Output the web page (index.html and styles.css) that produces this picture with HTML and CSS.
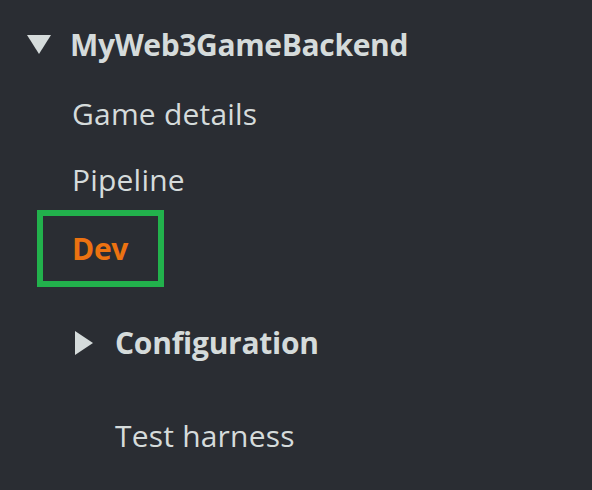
FILE: index.html
```html
<!DOCTYPE html>
<html>
<head>
<meta charset="utf-8">
<link rel="stylesheet" href="styles.css">
</head>
<body>
<nav class="tree">
  <div class="head">
    <svg class="caret-down" width="24" height="19" viewBox="0 0 24 19"><polygon points="0,0 24,0 12,19" fill="#d5dbdb"/></svg>
    <span class="title">MyWeb3GameBackend</span>
  </div>
  <ul class="items">
    <li class="item item-game">Game details</li>
    <li class="item item-pipe">Pipeline</li>
    <li class="item item-dev"><span class="dev-box">Dev</span></li>
    <li class="item item-config">
      <svg class="caret-right" width="18" height="24" viewBox="0 0 18 24"><polygon points="0,0 18,12 0,24" fill="#d5dbdb"/></svg>
      <span class="config">Configuration</span>
    </li>
    <li class="item item-test">Test harness</li>
  </ul>
</nav>
</body>
</html>
```

FILE: styles.css
```css
html, body {
  margin: 0;
  padding: 0;
  background: #2a2d33;
  height: 100%;
}
body {
  font-family: "Open Sans", "Noto Sans", sans-serif;
  font-size: 30px;
  line-height: 40px;
  color: #d5dbdb;
  overflow: hidden;
  letter-spacing: 0.2px;
}
.tree {
  padding-left: 27px;
  padding-top: 25px;
}
.head {
  display: flex;
  align-items: center;
  height: 40px;
}
.caret-down {
  margin-right: 19px;
  margin-top: -1px;
}
.title {
  font-weight: 700;
  letter-spacing: -0.35px;
}
.items {
  list-style: none;
  margin: 0;
  padding: 0 0 0 10px;
}
.item {
  height: 40px;
  padding-left: 35px;
}
.item-game { margin-top: 29px; }
.item-pipe { margin-top: 26px; }
.item-dev {
  margin-top: 10px;
  height: auto;
  padding-left: 0;
}
.dev-box {
  display: block;
  box-sizing: border-box;
  width: 127px;
  height: 77px;
  border: 6px solid #22b14c;
  padding: 13px 0 0 29px;
  color: #ec7211;
  font-weight: 700;
  letter-spacing: -0.3px;
}
.item-config {
  margin-top: 36px;
  padding-left: 38px;
  display: flex;
  align-items: center;
}
.caret-right {
  margin-right: 22px;
}
.config {
  font-weight: 700;
  letter-spacing: -0.25px;
}
.item-test {
  margin-top: 53px;
  padding-left: 78px;
}
```
